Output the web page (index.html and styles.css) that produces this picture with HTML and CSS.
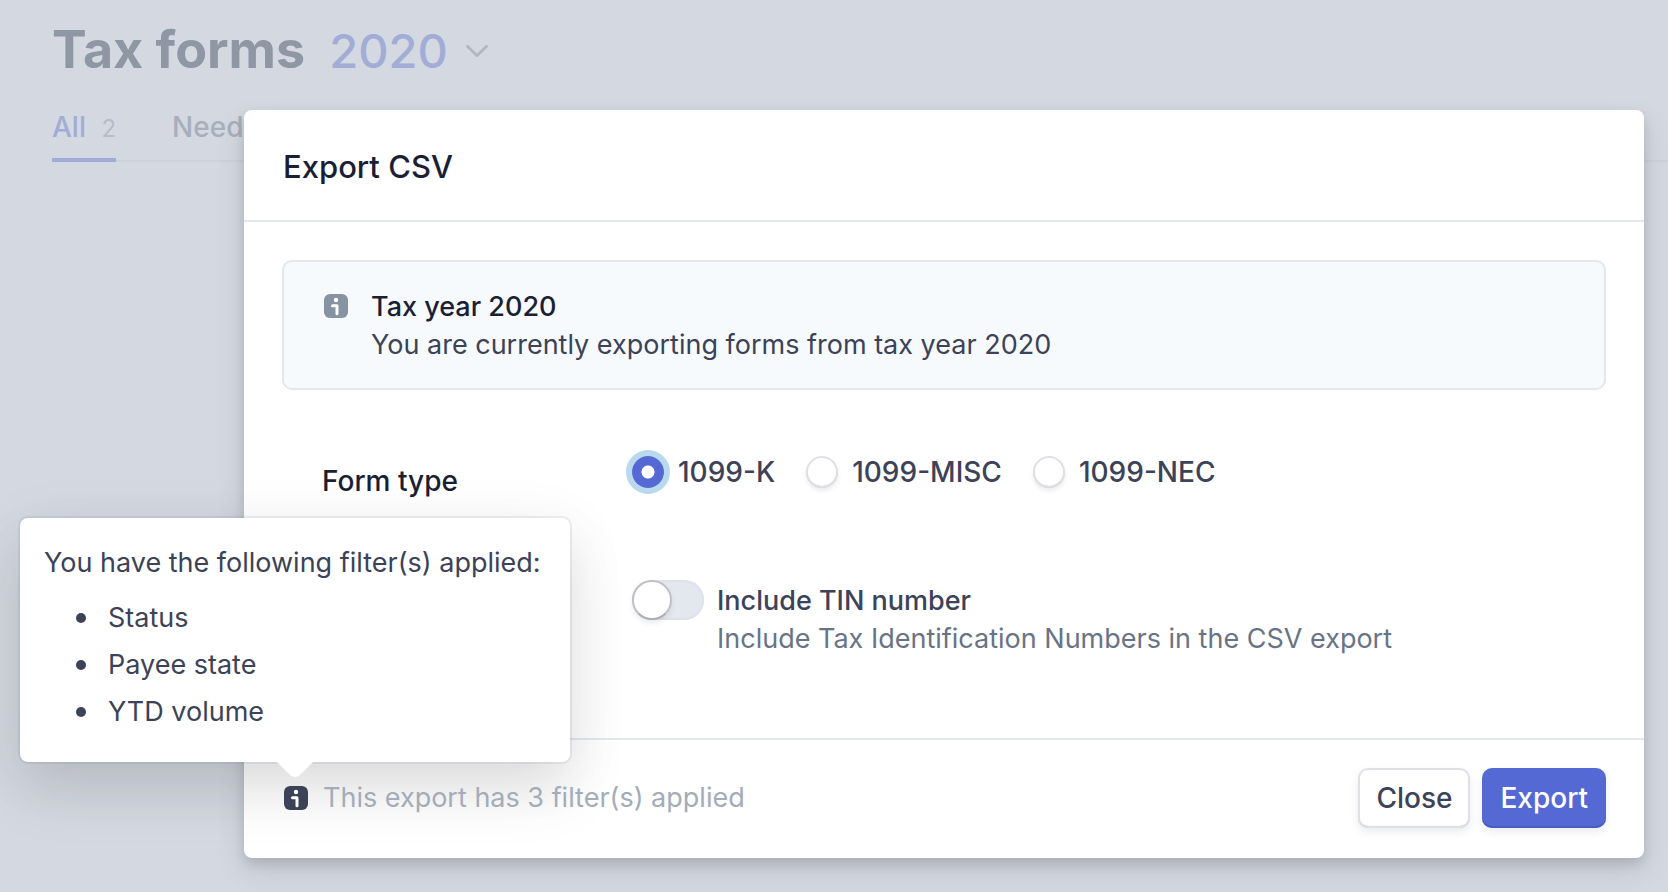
FILE: index.html
```html
<!DOCTYPE html>
<html lang="en">
<head>
  <meta charset="UTF-8" />
  <meta name="viewport" content="width=device-width, initial-scale=1" />
  <title>Tax forms</title>
  <link rel="stylesheet" href="styles.css">
</head>
<body>

<main class="page">
  <header class="page-header">
    <h1>Tax forms</h1>
    <div class="year">
      <select class="year-select" aria-label="Tax year">
        <option>2020</option>
      </select>
      <svg class="chevron" viewBox="0 0 24 16" aria-hidden="true"><path d="M3 3l9 9 9-9" /></svg>
    </div>
  </header>
  <nav class="tabs">
    <a class="tab active" href="#all">All <span class="count">2</span></a>
    <a class="tab" href="#needs">Needs</a>
  </nav>
</main>

<div class="overlay">
  <form class="modal" role="dialog" aria-labelledby="title">
    <header class="modal-header">
      <h2 id="title">Export CSV</h2>
    </header>

    <div class="modal-body">
      <div class="notice">
        <svg class="info" viewBox="0 0 24 24" aria-hidden="true">
          <rect width="24" height="24" rx="6" />
          <circle cx="12" cy="6" r="2.2" />
          <path d="M8.5 11.8h4.5v8" />
        </svg>
        <div>
          <div class="strong">Tax year 2020</div>
          <div class="notice-text">You are currently exporting forms from tax year 2020</div>
        </div>
      </div>

      <div class="fields">
        <div class="field-name" id="form-type">Form type</div>
        <div class="radios" role="radiogroup" aria-labelledby="form-type">
          <label class="radio"><input type="radio" name="form" checked />1099-K</label>
          <label class="radio"><input type="radio" name="form" />1099-MISC</label>
          <label class="radio"><input type="radio" name="form" />1099-NEC</label>
        </div>
        <div class="tin">
          <input class="toggle" type="checkbox" id="tin" />
          <div class="tin-text">
            <label class="tin-label" for="tin">Include TIN number</label>
            <div class="hint">Include Tax Identification Numbers in the CSV export</div>
          </div>
        </div>
      </div>
    </div>

    <footer class="modal-footer">
      <div class="filters">
        <svg class="info dark" viewBox="0 0 24 24" aria-hidden="true">
          <rect width="24" height="24" rx="6" />
          <circle cx="12" cy="6" r="2.2" />
          <path d="M8.5 11.8h4.5v8" />
        </svg>
        <span>This export has 3 filter(s) applied</span>
        <div class="tooltip" role="tooltip">
          <p>You have the following filter(s) applied:</p>
          <ul>
            <li>Status</li>
            <li>Payee state</li>
            <li>YTD volume</li>
          </ul>
          <svg class="arrow" viewBox="0 0 36 16" aria-hidden="true"><path d="M0 0h36L23 13q-5 4-10 0z" /></svg>
        </div>
      </div>
      <button class="btn" type="button">Close</button>
      <button class="btn primary" type="button">Export</button>
    </footer>
  </form>
</div>

</body>
</html>
```
FILE: styles.css
```css
*, *::before { box-sizing: border-box; }
body {
  margin: 0;
  min-height: 100vh;
  background: #d4d8e0;
  color: #3c4257;
  font: 27px/38px Inter, "Liberation Sans", sans-serif;
}
h1, h2, p, ul { margin: 0; }
input, select, button { font: inherit; color: inherit; margin: 0; }

/* page behind the dialog */
.page { position: absolute; inset: 0 0 auto 52px; }
.page-header { display: flex; align-items: baseline; gap: 24px; padding-top: 16px; }
h1 { font-size: 52px; line-height: 68px; font-weight: 700; color: #8f96a4; }
.year { display: flex; align-items: center; gap: 16px; }
.year-select {
  appearance: none;
  border: 0;
  padding: 0;
  background: none;
  color: #a1add6;
  font-size: 47px;
  line-height: 60px;
  font-weight: 500;
}
.chevron { width: 26px; height: 17px; fill: none; stroke: #b0b7c3; stroke-width: 2.5; stroke-linecap: round; stroke-linejoin: round; }
.tabs { display: flex; gap: 56px; margin-top: 24px; box-shadow: inset 0 -2px #cdd1d9; }
.tab { height: 54px; padding-top: 3px; color: #a7afbc; font-size: 28px; font-weight: 500; line-height: 32px; text-decoration: none; }
.tab.active { color: #a1add6; border-bottom: 4px solid #a1add6; }
.count { margin-left: 8px; color: #b6bdc8; font-size: 24px; font-weight: 400; }

/* dialog */
.overlay { position: relative; padding: 110px 24px 34px 244px; }
.modal {
  border-radius: 8px;
  background: #fff;
  box-shadow: 0 12px 28px rgba(60, 66, 87, .14), 0 6px 12px rgba(0, 0, 0, .12);
}
.modal-header { padding: 38px 39px 34px; border-bottom: 2px solid #e3e8ee; }
h2 { color: #1a1f36; font-size: 31px; line-height: 38px; font-weight: 500; }
.modal-body { padding: 38px 38px 80px; }
.notice {
  display: flex;
  gap: 23px;
  padding: 26px 40px 24px;
  border: 2px solid #e3e8ee;
  border-radius: 10px;
  background: #f7fafc;
}
.info { flex: none; width: 24px; height: 24px; margin-top: 6px; fill: #8792a2; }
.info circle { fill: #fff; }
.info path { fill: none; stroke: #fff; stroke-width: 3; stroke-linecap: round; stroke-linejoin: round; }
.info.dark { margin: 0; fill: #3c4257; }
.strong, .field-name { color: #1a1f36; font-weight: 500; }

.fields { display: grid; grid-template-columns: 310px 1fr; row-gap: 80px; padding: 64px 0 0 40px; }
.field-name { padding-top: 8px; font-size: 28px; }
.radios { display: flex; gap: 31px; height: 36px; margin-bottom: 10px; }
.radio { display: flex; align-items: center; gap: 14px; font-size: 28px; font-weight: 500; }
.radio input {
  appearance: none;
  width: 32px;
  height: 32px;
  border-radius: 50%;
  background: #fff;
  box-shadow: inset 0 0 0 2px #dfe0e4, inset 0 -2px 1px #c4c5ca, 0 3px 4px rgba(60, 66, 87, .1);
}
.radio input:checked {
  background: radial-gradient(circle, #fff 6px, #5469d4 7px);
  box-shadow: 0 0 0 6px #b9d9ef;
}
.tin { grid-column: 2; display: flex; align-items: flex-start; gap: 13px; }
.tin-text { padding-top: 2px; }
.toggle {
  appearance: none;
  flex: none;
  width: 72px;
  height: 40px;
  border-radius: 20px;
  background: #e3e8ee;
  box-shadow: inset 0 0 0 2px #dfe2e8;
}
.toggle::before {
  content: "";
  display: block;
  width: 40px;
  height: 40px;
  border: 2px solid #c0c1c8;
  border-bottom-color: #acadb5;
  border-radius: 50%;
  background: #fff;
  box-shadow: 0 3px 5px rgba(60, 66, 87, .1);
}
.tin-label { display: block; font-weight: 500; }
.hint { color: #697386; }

.modal-footer { display: flex; align-items: center; gap: 12px; padding: 28px 38px 30px; border-top: 2px solid #e3e8ee; }
.filters { position: relative; display: flex; align-items: center; gap: 15px; margin: 0 auto 0 2px; color: #a3acb9; }
.filters > span { position: relative; z-index: 2; }
.filters > .info { position: relative; z-index: 2; }
.btn {
  height: 60px;
  padding: 0 18px;
  border: 0;
  border-radius: 10px;
  background: #fff;
  font-size: 28px;
  font-weight: 500;
  box-shadow: inset 0 0 0 2px #dfe0e5, inset 0 -2px 1px #bfc0c6, 0 4px 8px rgba(60, 66, 87, .1);
}
.btn.primary { background: #5469d4; color: #fff; box-shadow: inset 0 -2px #4a5cbe, 0 4px 8px rgba(60, 66, 87, .1); }

.tooltip {
  position: absolute;
  left: -264px;
  bottom: 55px;
  z-index: 1;
  width: 550px;
  padding: 26px 24px 27px;
  border-radius: 8px;
  background: #fff;
  color: #3c4257;
  box-shadow: 0 0 0 2px rgba(60, 66, 87, .08), 0 10px 60px rgba(60, 66, 87, .08), 0 30px 60px rgba(0, 0, 0, .1);
}
.tooltip p { white-space: nowrap; }
.tooltip ul { padding: 12px 0 0 32px; list-style: none; }
.tooltip li { display: flex; align-items: center; gap: 22px; line-height: 47px; }
.tooltip li::before { content: ""; width: 10px; height: 10px; border-radius: 50%; background: #3c4257; }
.arrow { position: absolute; left: 257px; top: 100%; width: 36px; height: 16px; fill: #fff; }
```
